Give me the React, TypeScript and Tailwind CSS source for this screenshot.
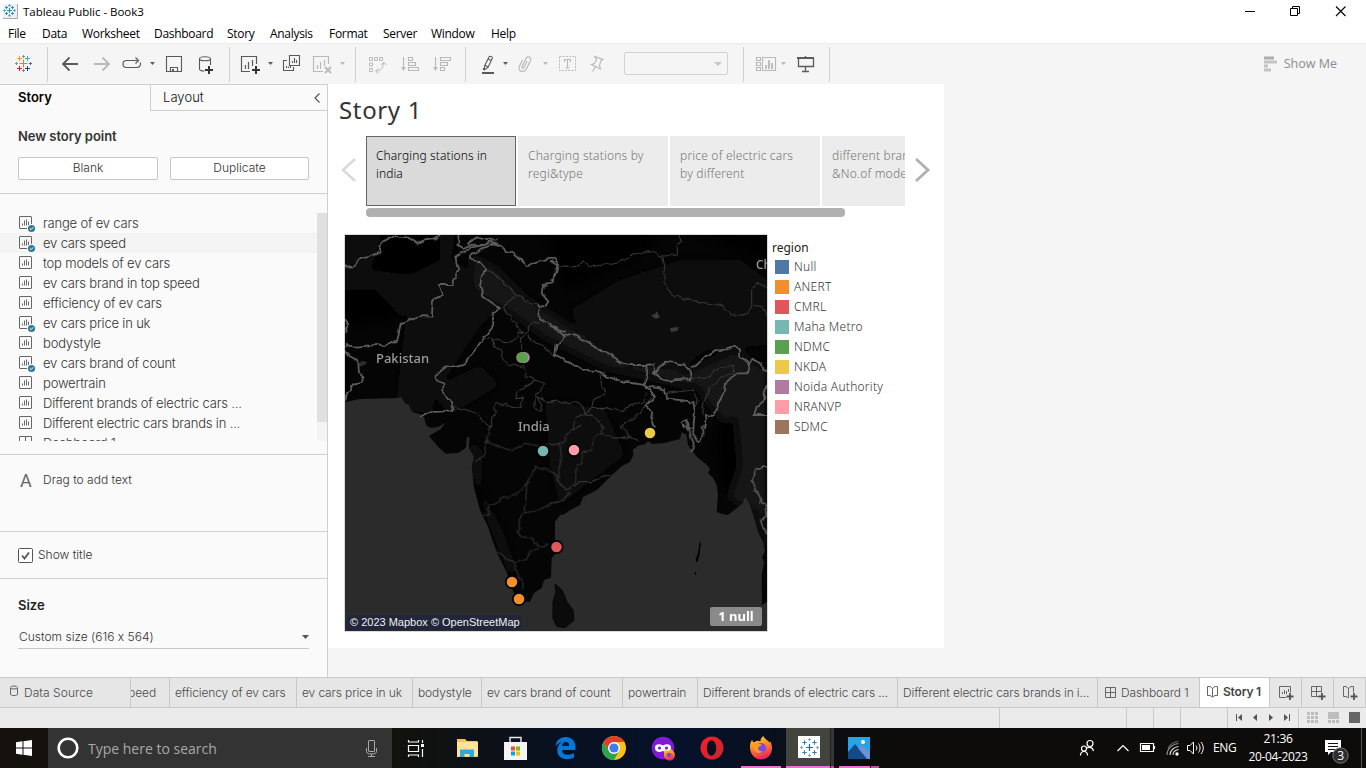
import React from "react";

type SegProps = { x: number; y: number; w: number; h: number; children?: React.ReactNode };

/* A strip of drawing whose viewBox uses window coordinates. */
function Seg({ x, y, w, h, children }: SegProps) {
  return (
    <svg className="block shrink-0" width={w} height={h} viewBox={`${x} ${y} ${w} ${h}`} fill="none">
      {children}
    </svg>
  );
}

const D = "#5a5a5a";
const L = "#b9b9b9";

function Caret({ x, y = 62, c = D }: { x: number; y?: number; c?: string }) {
  return <path d={`M${x} ${y}h5l-2.5 3z`} fill={c} />;
}

function Plus({ x, y, r, c, w = 1 }: { x: number; y: number; r: number; c: string; w?: number }) {
  return <path d={`M${x - r} ${y}h${2 * r}M${x} ${y - r}v${2 * r}`} stroke={c} strokeWidth={w} />;
}

function Tool({ x, w, children }: { x: number; w: number; children?: React.ReactNode }) {
  return (
    <Seg x={x} y={44} w={w} h={40}>
      {children}
    </Seg>
  );
}

function TitleBar() {
  return (
    <div className="flex h-[23px] shrink-0 items-center bg-white pl-[3px] font-['Open_Sans',sans-serif]">
      <svg width="15" height="15" viewBox="3 4 15 15" className="block shrink-0" fill="none">
        <path d="M3 4h14v14h-14z" fill="#eef1f3" />
        <path d="M17.5 4v14.5H3" stroke="#aaa" />
        <Plus x={9.500} y={10.500} r={2.500} c="#2f86b5" />
        <Plus x={6.500} y={7.500} r={1.500} c="#3b8dbb" />
        <Plus x={12.500} y={7.500} r={1.500} c="#3b8dbb" />
        <Plus x={6.500} y={13.500} r={1.500} c="#3b8dbb" />
        <Plus x={12.500} y={13.500} r={1.500} c="#3b8dbb" />
        <Plus x={9.500} y={5.500} r={1.300} c="#5aa0c8" />
        <Plus x={9.500} y={15.500} r={1.300} c="#5aa0c8" />
        <Plus x={4.500} y={10.500} r={1.300} c="#5aa0c8" />
        <Plus x={14.500} y={10.500} r={1.300} c="#5aa0c8" />
      </svg>
      <span className="ml-[5px] flex-1 text-[11.5px] tracking-[-0.03px] text-black">Tableau Public - Book3</span>
      <Seg x={1230} y={0} w={136} h={22}>
        <path d="M1245 10.5h10" stroke="#000" />
        <path d="M1290.500 7.500h7v7h-7zM1292.500 7.500v-2h7v7h-2" stroke="#000" />
        <path d="M1336 5.500l9.500 9.500M1345.500 5.500l-9.500 9.500" stroke="#000" strokeWidth="1.100" />
      </Seg>
    </div>
  );
}

const menu: [string, string][] = [
  ["File", "w-[34px]"],
  ["Data", "w-10"],
  ["Worksheet", "w-[72px]"],
  ["Dashboard", "w-[73px]"],
  ["Story", "w-[43px]"],
  ["Analysis", "w-[59px]"],
  ["Format", "w-[54px]"],
  ["Server", "w-12"],
  ["Window", "w-[60px]"],
  ["Help", "w-10"],
];

function MenuBar() {
  return (
    <div className="flex h-5 shrink-0 items-center bg-white pt-[2px] pl-2 font-['Open_Sans',sans-serif] text-[12px] tracking-[-0.3px] whitespace-nowrap text-black">
      {menu.map(([m, w]) => (
        <span key={m} className={`${w} shrink-0`}>
          {m}
        </span>
      ))}
    </div>
  );
}

function Toolbar() {
  return (
    <div className="flex h-[41px] shrink-0 border-t border-[#ececec] bg-[#f5f5f5]">
      <Tool x={0} w={56}>
        <Plus x={23.500} y={63.500} r={4} c="#e8762d" />
        <Plus x={19.500} y={58.500} r={2.500} c="#eb9a45" />
        <Plus x={27.500} y={58.500} r={2.500} c="#5f9aa8" />
        <Plus x={19.500} y={68.500} r={2.500} c="#c72035" />
        <Plus x={27.500} y={68.500} r={2.500} c="#1f457e" />
        <Plus x={23.500} y={56.500} r={1.500} c="#7199a6" />
        <Plus x={23.500} y={70.500} r={1.500} c="#7b85a9" />
        <Plus x={16.500} y={63.500} r={1.500} c="#7199a6" />
        <Plus x={30.500} y={63.500} r={1.500} c="#5b6591" />
        <path d="M47.500 47v35" stroke="#d0d0d0" />
      </Tool>
      <Tool x={56} w={60}>
        <path d="M63 64h15M69.500 57.500L63 64l6.500 6.500" stroke={D} strokeWidth="1.800" />
        <path d="M94 64h15M102.500 57.500L109 64l-6.500 6.500" stroke={L} strokeWidth="1.800" />
      </Tool>
      <Tool x={116} w={44}>
        <path d="M126.500 60.500h11M137 67.500h-10.500a3.500 3.500 0 0 1 0-7M137 67.500a3.500 3.500 0 0 0 3.200-5M135.500 57.500l3 3-3 3" stroke={D} strokeWidth="1.200" />
        <Caret x={150} />
      </Tool>
      <Tool x={160} w={74}>
        <path d="M166.500 56.500h15v15h-15zM170.500 71.500v-4h7v4" stroke={D} strokeWidth="1.100" />
        <path d="M172 69h2v3h-2z" fill={D} />
        <path d="M199.500 59v10c0 1.200 2 2 5 2M210.500 59v6" stroke={D} strokeWidth="1.100" />
        <ellipse cx="205" cy="58.700" rx="5.500" ry="2" stroke={D} strokeWidth="1.100" />
        <Plus x={209} y={70} r={4} c="#333" w={2} />
        <path d="M229.500 47v35" stroke="#d0d0d0" />
      </Tool>
      <Tool x={234} w={124}>
        <path d="M250 71.500h-8.500v-15h15V64M245.500 69v-4M248.500 69v-7M252.500 66v-6" stroke={D} strokeWidth="1.200" />
        <Plus x={256} y={70} r={4} c="#333" w={2} />
        <Caret x={268} />
        <path d="M289.500 55.500h10v10h-10zM292.500 63v-2M294.500 63v-5M296.500 63v-3M287 60.500h-3.500v10h10v-3.500M286.500 68v-2M288.500 68v-1.500M290.500 68v-2" stroke={D} strokeWidth="1.100" />
        <path d="M323 71.500h-9.500v-15h15V64M317.500 69v-4M320.500 69v-7M324.500 66v-6" stroke={L} strokeWidth="1.200" />
        <path d="M325 67l6 6M331 67l-6 6" stroke={L} strokeWidth="1.800" />
        <Caret x={340} c={L} />
        <path d="M355.500 47v35" stroke="#d0d0d0" />
      </Tool>
      <Tool x={358} w={112}>
        <path d="M369.500 57.500h3v3h-3zM374.500 57.500h3v3h-3zM379.500 57.500h3v3h-3zM369.500 63h3v3h-3zM369.500 68.500h3v3h-3zM376 71c4 0 7-2 7.500-8M381 65l2.800-2.800L386 65M378.500 68.500L375.500 71l3 2.500" stroke={L} />
        <path d="M403.500 57v12M408.500 57.500h4v3h-4zM408.500 62.500h7v3h-7zM408.500 67.500h10v3h-10z" stroke={L} strokeWidth="1.100" />
        <path d="M401 67h5l-2.500 4z" fill={L} />
        <path d="M435.500 57v12M440.500 57.500h10v3h-10zM440.500 62.500h7v3h-7zM440.500 67.500h4v3h-4z" stroke={L} strokeWidth="1.100" />
        <path d="M433 67h5l-2.500 4z" fill={L} />
        <path d="M465.500 47v35" stroke="#d0d0d0" />
      </Tool>
      <Tool x={470} w={144}>
        <path d="M484.500 66l4.500-9c.8-1.500 4-.2 3.200 1.500L488 67.500l-3.500 2.300zM488 59l3.300 1.500M484.500 65l3.500 2M483.500 68v2" stroke={D} strokeWidth="1.100" />
        <path d="M482 72h12v2h-12z" fill={D} />
        <Caret x={503} />
        <path d="M527 61l-3 6.500c-.6 1.400-2.600.5-2-1l4-8c1.500-3.200 6-1.200 4.500 2l-4.500 9c-1.500 2.800-5 2.200-6.500.5-1-1.200-.6-2.600 0-4l3-6" stroke={L} strokeWidth="1.200" />
        <Caret x={543} c={L} />
        <path d="M559.500 56.500h16v14h-16z" stroke={L} strokeDasharray="2 1.200" />
        <path d="M564.500 62v-2.500h6V62M567.500 59.500V68M565.500 68h4" stroke={L} strokeWidth="1.200" />
        <path d="M594.500 56.500l8.500 3-2 1.200-1.500 4.800 1 3.500-9-4.500 3-1 2-4.500zM595.500 67l-3 4.500" stroke={L} strokeWidth="1.100" />
      </Tool>
      <div className="w-[10px] shrink-0" />
      <div className="mt-2 flex h-[23px] w-[104px] shrink-0 items-center justify-end rounded-[2px] border border-[#d2d2d2] pr-[5px]">
        <svg width="8" height="4" viewBox="0 0 8 4">
          <path d="M0 0h8L4 4z" fill="#c6c6c6" />
        </svg>
      </div>
      <Tool x={728} w={112}>
        <path d="M743.500 47v35M829.500 47v35" stroke="#d0d0d0" />
        <path d="M756.500 57.500h4v3h-4zM756.500 62.500h4v3h-4zM756.500 67.500h4v3h-4zM762.500 57.500h13v13h-13z" stroke={L} strokeWidth="1.100" />
        <path d="M766 69v-4M769 69v-9M772 69v-6" stroke={L} strokeWidth="1.800" />
        <Caret x={781} c={L} />
        <path d="M797 58h17" stroke={D} strokeWidth="2" />
        <path d="M798.500 58v8.500h15V58M805.500 67v4M802 71.500h7M805.500 56v1" stroke={D} strokeWidth="1.300" />
      </Tool>
      <div className="flex flex-1 items-center justify-end pt-px pr-[29px]">
        <Seg x={1263} y={55.500} w={20} h={17}>
          <path d="M1262 56h11v3h-11z" fill="#ababab" />
          <path d="M1262 60h14v3h-14zM1262 64h5v3h-5zM1262 68h8v3h-8z" fill="#c4c4c4" />
        </Seg>
        <span className="font-['Open_Sans',sans-serif] text-[12.5px] tracking-[0.02px] text-[#8c8c8c]">Show Me</span>
      </div>
    </div>
  );
}

const sheets: [string, boolean][] = [
  ["range of ev cars", true],
  ["ev cars speed", true],
  ["top models of ev cars", false],
  ["ev cars brand in top speed", false],
  ["efficiency of ev cars", false],
  ["ev cars price in uk", true],
  ["bodystyle", false],
  ["ev cars brand of count", true],
  ["powertrain", false],
  ["Different brands of electric cars ...", false],
  ["Different electric cars brands in ...", false],
];

function SheetIcon({ checked }: { checked: boolean }) {
  return (
    <svg width="18" height="20" viewBox="0 0 18 20" fill="none" className="block shrink-0">
      <rect x="1.500" y="3.500" width="12" height="12" rx="0.500" stroke="#666" />
      <path d="M4.500 12.500v-2M6.500 12.500v-5M8.500 12.500v-6M10.500 12.500v-4" stroke="#666" />
      {checked && (
        <g>
          <circle cx="13.500" cy="15.500" r="4.500" fill="#fafafa" />
          <circle cx="13.500" cy="15.500" r="3.600" fill="#31799b" />
          <path d="M11.800 15.500l1.200 1.200 2.200-2.300" stroke="#fff" />
        </g>
      )}
    </svg>
  );
}

function Sidebar() {
  return (
    <aside className="flex w-[328px] shrink-0 flex-col border-t border-r border-[#cfcfcf] bg-[#fafafa] font-['Inter',sans-serif] font-light text-[#333] [font-feature-settings:'calt'_0]">
      <div className="flex h-[26px] shrink-0 text-[13px] text-[#111]">
        <div className="flex w-[150px] items-center pl-[18px] font-semibold text-black">Story</div>
        <div className="flex flex-1 items-center justify-between border-b border-l border-[#cfcfcf] pr-[7px] pl-3">
          <span className="tracking-[0.05px]">Layout</span>
          <svg width="6" height="10" viewBox="0 0 6 10" fill="none">
            <path d="M5.500 .5L1 5l4.500 4.500" stroke="#555" strokeWidth="1.200" />
          </svg>
        </div>
      </div>
      <div className="flex h-[83px] shrink-0 flex-col border-b border-[#cfcfcf] px-[18px] pt-[15px]">
        <div className="h-[31px] text-[13px] leading-5 font-semibold tracking-[-0.05px] text-[#333]">New story point</div>
        <div className="flex gap-3">
          <div className="flex h-[23px] w-[140px] items-center justify-center rounded-[2px] border border-[#c6c6c6] bg-white pb-px text-[12px]">Blank</div>
          <div className="flex h-[23px] w-[139px] items-center justify-center rounded-[2px] border border-[#c6c6c6] bg-white pb-px text-[12px]">Duplicate</div>
        </div>
      </div>
      <div className="flex h-[261px] shrink-0 border-b border-[#cfcfcf] pt-[19px]">
        <div className="h-[228px] flex-1 overflow-hidden">
          {sheets.map(([name, checked], i) => (
            <div key={name} className={`flex h-5 items-center pl-[18px] ${i === 1 ? "bg-[#f4f4f4]" : ""}`}>
              <SheetIcon checked={checked} />
              <span className="ml-[7px] text-[13px] leading-5 tracking-[-0.18px] whitespace-nowrap">{name}</span>
            </div>
          ))}
          <div className="flex h-5 items-center pl-[18px]">
            <svg width="18" height="20" viewBox="0 0 18 20" fill="none">
              <path d="M1.500 3.500h12v12h-12zM7.500 3.500v12M1.500 9.500h12" stroke="#666" />
            </svg>
            <span className="ml-[7px] text-[13px] leading-5 tracking-[-0.18px]">Dashboard 1</span>
          </div>
        </div>
        <div className="h-[228px] w-[10px] bg-[#f4f4f4]">
          <div className="h-[209px] bg-[#e0e0e0]" />
        </div>
      </div>
      <div className="flex h-[77px] shrink-0 items-start border-b border-[#cfcfcf] pt-4 pl-[20px]">
        <span className="w-[23px] font-['Roboto',sans-serif] text-[18px] leading-[19px] font-normal text-[#666]">A</span>
        <span className="text-[12px] leading-[18px]">Drag to add text</span>
      </div>
      <div className="flex h-[47px] shrink-0 items-center border-b border-[#cfcfcf] pl-[18px]">
        <svg width="15" height="15" viewBox="0 0 15 15" fill="none">
          <rect x="0.500" y="0.500" width="14" height="14" rx="1" fill="#fff" stroke="#555" />
          <path d="M4 7.500L6.500 10.500 11 4.500" stroke="#555" strokeWidth="1.800" />
        </svg>
        <span className="ml-[5px] text-[12px]">Show title</span>
      </div>
      <div className="flex flex-1 flex-col px-[18px] pt-4">
        <div className="h-[31px] text-[13px] leading-5 font-semibold text-[#222]">Size</div>
        <div className="flex h-[23px] items-center justify-between border-b border-[#c6c6c6] pl-px text-[12px]">
          <span>Custom size (616 x 564)</span>
          <svg width="7" height="4" viewBox="0 0 7 4">
            <path d="M0 0h7L3.500 4z" fill="#555" />
          </svg>
        </div>
      </div>
    </aside>
  );
}

const countryNW = [
  "15,105 35,115 60,88 90,80 118,68 125,35 155,20 185,25 205,20 235,40 258,30 280,28 300,15",
  "355,15 355,45 370,55 395,44 430,45 455,35 475,40",
  "382,42 410,22 440,30 475,28",
  "15,345 45,350 105,345 130,348 172,332 182,280 240,258 275,260 280,208 308,195 298,165 335,165 355,120 345,80 395,52 430,45",
  "15,270 22,285 15,305",
  "15,360 30,380 55,395 57,430 73,440 65,458 40,465 22,490 15,515",
  "470,38 425,55 390,75 390,88 418,95 440,122 425,140 420,165 430,200 480,235 458,250 460,285 430,325 405,360 375,400 340,410 320,405 290,435 288,450 310,460 310,490 330,510 338,540 300,545 265,547 240,560",
  "455,38 480,48 495,62 520,70 560,105 590,98 620,88 640,85 655,100 645,130 640,160 610,165 605,190 625,215 615,230 595,225 600,265 625,280 675,310",
];
const stateNW = [
  "440,120 470,135 500,165 530,195 560,215 595,222",
  "530,200 500,215 490,235 500,250 530,285 550,310",
  "435,325 470,330 505,340 535,320 535,305 565,310 565,285 600,275",
  "460,330 460,348 485,360 490,385 505,405 520,400 545,410",
  "545,360 545,320 560,312",
  "545,400 555,420 560,440 585,450",
  "585,450 540,480 525,490 530,505 550,505 540,535 500,530 500,520 480,525 465,520 465,560 455,560 455,595 430,575 410,550 380,540 340,530",
  "585,450 610,460 605,480 585,495 585,535 600,545 605,525 590,500 620,515 655,510",
  "565,310 570,330 600,345 645,375",
];
const countryNE = [
  "45,318 20,345 15,375 60,400 120,425 150,425 170,440 220,455 285,465 290,405 240,405 210,400 185,375 155,365 130,345 100,330 65,310 45,318",
  "0,288 20,300 45,320",
  "0,95 22,105 20,125 10,145 0,150",
  "290,405 310,402 312,430 345,395 370,398 405,405 420,425 424,448 345,452 312,430",
  "420,412 440,405 465,380 500,362 530,358 555,350 570,355 570,380 600,400 615,390 635,400 640,420 655,425",
  "600,400 595,430 560,430 525,460 520,490 505,520 495,555 465,552 470,565 465,600",
  "285,465 300,470 345,478 348,505 430,515 435,545 430,590 415,595 410,570 395,575 405,600",
  "285,465 300,480 315,500 285,525 310,545 305,570 315,590",
  "655,460 640,490 645,510 620,530 612,555 655,555",
];
const stateNE = [
  "25,107 75,110 100,95 120,110 160,105 210,95 250,72 300,65 335,78 385,75 380,40 395,35 385,15",
  "335,80 345,120 345,165 375,200 430,212 520,228 545,255 580,255 605,235 605,180 620,160 645,170 655,185",
  "605,225 635,230 655,265",
  "425,445 480,440 490,420 550,405 550,430 520,440 480,470 465,510 455,550",
  "345,490 430,480 445,510 430,540",
  "150,430 155,465 165,490 130,510 125,535 105,555 100,530 80,515 40,520 15,510 0,515",
  "125,535 190,535 220,545 240,525 280,515 290,490",
  "65,600 80,560 125,555 150,575 160,600",
  "210,595 225,575 260,560 285,530",
];
const stateSW = [
  "455,0 435,50 480,65 515,78 555,55 600,65 640,55 660,60",
  "440,45 430,95 405,110",
  "660,165 640,140 590,125 580,145 560,175 525,210 490,220 450,240 445,270 430,270",
  "560,175 555,265 540,270 535,320 545,335 580,340 595,365 625,360",
  "555,265 620,245 660,225",
  "470,375 500,405 530,410 560,400 570,380 600,370",
  "520,410 530,440 545,470 550,500",
];
const stateSE = [
  "0,60 30,60 35,100 25,140 20,165 50,195 90,170 125,170 150,155 185,150",
  "30,60 65,15 95,0",
  "150,0 155,20 130,45 125,75 100,80 95,120 80,120 80,165 60,195",
  "155,20 190,40 240,35 225,10",
  "215,0 245,40 265,50",
  "0,235 40,225 60,200",
];
const countrySE = [
  "400,0 415,15 435,65 425,80",
  "430,0 430,30 445,50 460,35 455,10 465,0",
  "655,125 620,130 605,170 625,210 645,240 650,270 630,290 655,330",
];

const quads = [
  { at: "translate(340 230) scale(.33333)", country: countryNW, state: stateNW },
  { at: "translate(550 230) scale(.33333)", country: countryNE, state: stateNE },
  { at: "translate(340 425) scale(.33333)", country: [] as string[], state: stateSW },
  { at: "translate(550 425) scale(.33333)", country: countrySE, state: stateSE },
];

const markers: [number, number, string][] = [
  [543, 451, "#76b7b2"],
  [574, 450, "#ff9da7"],
  [650, 433, "#edc948"],
  [556.5, 547, "#e15759"],
  [512, 582, "#f28e2b"],
  [519, 599, "#f28e2b"],
];

function IndiaMap() {
  return (
    <div className="relative h-[398px] w-[424px] shrink-0 overflow-hidden border border-[#d9d9d9] bg-[#060606]">
      <svg width="422" height="396" viewBox="345 235 422 396" fill="none" className="block">
        <defs>
          <filter id="soft" x="-5%" y="-5%" width="110%" height="110%">
            <feGaussianBlur stdDeviation="5" />
          </filter>
          <filter id="jag" filterUnits="userSpaceOnUse" x="345" y="235" width="422" height="396" colorInterpolationFilters="sRGB">
            <feTurbulence type="fractalNoise" baseFrequency="0.16" numOctaves="1" seed="4" />
            <feDisplacementMap in="SourceGraphic" scale="6" xChannelSelector="R" yChannelSelector="G" />
          </filter>
        </defs>
        <path d="M345 235h422v396h-422z" fill="#050505" />
        <g filter="url(#soft)">
          <path d="M345 235h110l-8 45-22 30-45 12-35 5z" fill="#0c0c0c" />
          <path d="M405 325l25-45 15-25 30 20 25 30-20 22-30 45-20 20 5 20-40 0z" fill="#0a0a0a" />
          <path d="M430 312l12-30 14 8-8 50-20 4z" fill="#111" />
          <path d="M470 255l25 12 30 30 32 20 60 40 70 15 50 2-2 14-50-2-80-18-60-30-30-22-40-28z" fill="#141414" />
          <path d="M570 310l50-30 60-20 60 0 27 20v65l-60 5-30 20-50-5-40-25z" fill="#0b0b0b" />
          <path d="M380 240h60v20l-30 15-40-5z" fill="#030303" />
          <path d="M345 290l30 0 25 25-55 12z" fill="#000" />
          <path d="M545 235h120l-40 30-60 25z" fill="#000" />
          <path d="M690 235h77v25z" fill="#000" />
          <path d="M690 370l45-20 32 20v50l0 140-12-50-25-10 0-70-25-30z" fill="#131313" />
          <path d="M715 430l20-15 5 50-10 30-12-20z" fill="#050505" />
          <path d="M470 440l12 10 0 40 20 40 15 40-8 5-20-50-20-60z" fill="#111" />
          <path d="M545 400l60 10 20 45-40 30-25 20-10-40z" fill="#0c0c0c" />
          <path d="M430 390l50-25 20 20-50 30z" fill="#0b0b0b" />
        </g>
        <path
          d="M345 402L360 399 398 398 401 397 405 403 409 405 412 412 420 414 424 417 426 425 430 428 438 427 445 423 441 429 434 433 429 436 438 446.700 446 453.700 458 453 466 447.700 466.700 437.700 469.500 436.500 469 448 474 457 471.700 467 474 488 480 510 488 526.700 493 541.700 498 555 506.700 572 511.700 588 518 601.700 530 601.700 534 593 541.700 588 544 580 551 577.700 551.700 558 557 552 555 538 555 521.700 560 515 565 514 570 510 580 505 583 497 597 490 612 475 622 466 630 462 633.500 455 632.700 450 638 445.700 645 444 648 441 652 444 665 443 672 441 680 439 681.700 432 686.700 435 688 445 693 452 697 457 707 465 710 469 708 473 713 477.700 716.700 485 718 495 716.700 511.700 722 514 728 515 736.700 508 743 503 745 497 750 505 754 518 758 532 763 542 765 551 762 557 764 562 761.700 575 762 605 767 602V631H345z"
          fill="#2b2b2b"
        />
        <path d="M555 584l7 6 5 12 6 8 1 10-9 7.500-8-1-4-8v-17l3-9z" fill="#0b0b0b" stroke="#050505" />
        <path d="M700.500 542l-1.500 13-2 7-1-3 2-4zM695 572l1 3" fill="#000" stroke="#000" />
        <path d="M651 315l4-1 2-3 1 3 2 3-4 2-3-2zM670 328l9-1-2 4-6 1z" fill="#3a3a3a" />
        <path d="M358 364l4-3 5 1-2 3-4 1z" fill="#2b2b2b" />
        <g filter="url(#jag)">
          {quads.map((q) => (
            <g key={q.at} transform={q.at} strokeLinejoin="round">
              {q.state.map((p) => (
                <polyline key={p} points={p} stroke="#363636" strokeWidth="3.300" />
              ))}
              {q.country.map((p) => (
                <polyline key={p} points={p} stroke="#5c5c5c" strokeWidth="5.400" />
              ))}
            </g>
          ))}
        </g>
        <g fontFamily="'Noto Sans', sans-serif" fontSize="13" fontWeight="500" fill="#9c9c9c">
          <text x="376" y="363">Pakistan</text>
          <text x="518" y="431">India</text>
          <text x="756" y="269" fontSize="12">China</text>
        </g>
        <circle cx="522.500" cy="357.500" r="7" fill="#000" />
        <circle cx="524" cy="357.500" r="5.700" fill="#c77fb4" />
        <circle cx="521.700" cy="357.500" r="5.600" fill="#9c755f" />
        <circle cx="522.500" cy="357.500" r="5.500" fill="#59a14f" />
        {markers.map(([x, y, c]) => (
          <g key={`${x}`}>
            <circle cx={x} cy={y} r="7" fill="#000" />
            <circle cx={x} cy={y} r="5.300" fill={c} />
          </g>
        ))}
      </svg>
      <div className="absolute bottom-px left-[2px] flex h-[15px] w-[175px] items-center bg-[#22263a] pl-[3px] font-['Liberation_Sans',sans-serif] text-[11px] whitespace-nowrap text-[#f0f0f0]">
        © 2023 Mapbox © OpenStreetMap
      </div>
      <div className="absolute right-[5px] bottom-[5px] flex h-[19px] w-[52px] items-center justify-center rounded-[2px] bg-[#8a8a8a] font-['Noto_Sans',sans-serif] text-[13px] font-bold text-white">
        1 null
      </div>
    </div>
  );
}

const legend: [string, string][] = [
  ["Null", "bg-[#4e79a7]"],
  ["ANERT", "bg-[#f28e2b]"],
  ["CMRL", "bg-[#e15759]"],
  ["Maha Metro", "bg-[#76b7b2]"],
  ["NDMC", "bg-[#59a14f]"],
  ["NKDA", "bg-[#edc948]"],
  ["Noida Authority", "bg-[#b07aa1]"],
  ["NRANVP", "bg-[#ff9da7]"],
  ["SDMC", "bg-[#9c755f]"],
];

const points: [string, string][] = [
  ["Charging stations in", "india"],
  ["Charging stations by", "regi&type"],
  ["price of electric cars", "by different"],
  ["different brands", "&No.of models"],
];

function StoryCanvas() {
  return (
    <main className="flex flex-1 bg-[#f5f5f5]">
      <div className="flex h-[564px] w-[616px] flex-col bg-white font-['Noto_Sans',sans-serif]">
        <div className="h-[52px] shrink-0 pl-[11px] text-[24px] leading-[51px] tracking-[0.65px] text-[#333]">Story 1</div>
        <div className="flex h-[70px] shrink-0 items-center">
          <div className="w-[38px] shrink-0 pb-[2px] pl-[13px]">
            <svg width="16" height="26" viewBox="0 0 16 26" fill="none">
              <path d="M14 2L2 13l12 11" stroke="#dadada" strokeWidth="2.600" />
            </svg>
          </div>
          <div className="flex h-[70px] w-[539px] shrink-0 gap-[2px] overflow-hidden">
            {points.map(([a, b], i) => (
              <div
                key={a}
                className={`h-[70px] w-[150px] shrink-0 pt-[11px] pl-[10px] text-[12px] leading-[18px] font-light whitespace-nowrap ${
                  i === 0
                    ? "bg-[#dadada] tracking-[0.1px] text-black outline outline-1 -outline-offset-1 outline-[#666]"
                    : "bg-[#ececec] tracking-[0.2px] text-[#777]"
                }`}
              >
                <div>{a}</div>
                <div>{b}</div>
              </div>
            ))}
          </div>
          <div className="pb-[2px] pl-[9px]">
            <svg width="18" height="26" viewBox="0 0 18 26" fill="none">
              <path d="M2 2l12 11L2 24" stroke="#b0b0b0" strokeWidth="2.800" />
            </svg>
          </div>
        </div>
        <div className="mt-[2px] ml-[38px] h-[9px] w-[479px] shrink-0 rounded-[4px] bg-[#b0b0b0]" />
        <div className="mt-[17px] flex pl-4">
          <IndiaMap />
          <div className="flex flex-col pt-1 pl-1 text-[12px] font-light tracking-[0.25px] text-[#333]">
            <div className="h-[19px] leading-[19px] font-normal tracking-[0px] text-[#222]">region</div>
            {legend.map(([name, c]) => (
              <div key={name} className="flex h-5 items-center pl-[3px] leading-5">
                <span className={`mr-[5px] size-[14px] ${c}`} />
                {name}
              </div>
            ))}
          </div>
        </div>
      </div>
    </main>
  );
}

const tabs: [string, string][] = [
  ["efficiency of ev cars", "w-[127px]"],
  ["ev cars price in uk", "w-[116px]"],
  ["bodystyle", "w-[69px]"],
  ["ev cars brand of count", "w-[141px]"],
  ["powertrain", "w-[75px]"],
  ["Different brands of electric cars ...", "w-[200px]"],
  ["Different electric cars brands in i...", "w-[200px]"],
];

function SheetTabs() {
  return (
    <div className="flex h-[31px] shrink-0 border-t border-b border-[#c9c9c9] bg-[#e6e6e6] font-['Inter',sans-serif] text-[12px] font-light tracking-[-0.12px] whitespace-nowrap text-[#4a4a4a]">
      <div className="flex w-[131px] shrink-0 items-center border-r border-[#c9c9c9] pl-[9px]">
        <svg width="10" height="14" viewBox="9 685 10 14" fill="none" className="mb-1">
          <path d="M10.500 689v6c0 1.300 1.500 1.500 3.500 1.500s3.500-.2 3.500-1.500v-6" stroke="#666" />
          <ellipse cx="14" cy="688.500" rx="3.500" ry="1.500" stroke="#666" />
        </svg>
        <span className="ml-[5px] tracking-[0.05px]">Data Source</span>
      </div>
      <div className="flex w-[39px] shrink-0 items-center justify-end overflow-hidden border-r border-[#c9c9c9] pr-[13px]">peed</div>
      {tabs.map(([t, w]) => (
        <div key={t} className={`flex shrink-0 items-center border-r border-[#c9c9c9] pl-[5px] ${w}`}>
          {t}
        </div>
      ))}
      <div className="flex w-[102px] shrink-0 items-center border-r border-[#c9c9c9] pl-[7px]">
        <svg width="11" height="11" viewBox="0 0 11 11" fill="none">
          <path d="M.5 .5h10v10h-10zM5.500 .5v10M.5 5.500h10" stroke="#666" />
        </svg>
        <span className="ml-[5px]">Dashboard 1</span>
      </div>
      <div className="flex w-[70px] shrink-0 items-center border-r border-[#c9c9c9] bg-white pb-[2px] pl-[6px] font-semibold tracking-[-0.2px] text-[#444]">
        <svg width="13" height="13" viewBox="0 0 13 13" fill="none">
          <path d="M1.500 1.500h2.500l2.500 2 2.500-2h2.500v9h-2.500l-2.500 1.500-2.500-1.500h-2.500zM6.500 3.500v8" stroke="#666" />
        </svg>
        <span className="ml-1">Story 1</span>
      </div>
      <Seg x={1270} y={678} w={96} h={29}>
        <path d="M1301.500 678v29M1333.500 678v29M1365.500 678v29" stroke="#c9c9c9" />
        <path d="M1286 697.500h-6.500v-11h11v6M1282.500 694v-2M1284.500 694v-4M1286.500 694v-3M1288.500 692v-3" stroke="#666" />
        <Plus x={1290} y={696.500} r={3.500} c="#555" w={1.800} />
        <path d="M1319 696.500h-7.500v-10h10v6M1316.500 686.500v10M1311.500 691.500h10" stroke="#666" />
        <Plus x={1322} y={696.500} r={3.500} c="#555" w={1.800} />
        <path d="M1348.500 698l-2.500-1.500h-2.500v-10h2.500l2.500 2 2.500-2h2.500v6M1348.500 688.500v9" stroke="#666" />
        <Plus x={1354} y={696.500} r={3.500} c="#555" w={1.800} />
      </Seg>
    </div>
  );
}

function StatusBar() {
  return (
    <div className="flex h-5 shrink-0 justify-end bg-[#ebebeb]">
      <Seg x={990} y={708} w={376} h={20}>
        <path d="M999.500 708v20M1126.500 708v20M1153.500 708v20M1180.500 708v20M1227.500 708v20M1298.500 708v20" stroke="#c9c9c9" />
        <path d="M1242 714v7l-4-3.500zM1257 714v7l-4-3.500zM1269 714v7l4-3.500zM1284 714v7l4-3.500z" fill="#555" />
        <path d="M1236.500 714v7M1289.500 714v7" stroke="#555" />
        <g fill="#bdbdbd">
          {[1307, 1311, 1315].map((x) =>
            [712, 716, 720].map((y) => <rect key={`${x}${y}`} x={x} y={y} width="3" height="3" />),
          )}
          <path d="M1328 712h11v7h-11zM1328 720h3v3h-3zM1332 720h3v3h-3zM1336 720h3v3h-3z" />
        </g>
        <path d="M1349 712h11v11h-11z" fill="#666" />
      </Seg>
    </div>
  );
}

function Taskbar() {
  return (
    <div className="flex h-10 shrink-0 bg-[#0d0c0a] font-['Open_Sans',sans-serif] text-white">
      <Seg x={0} y={728} w={48} h={40}>
        <path d="M0 728h48v40h-48z" fill="#15120d" />
        <path d="M16 742.200l6.500-.9v6.200H16zM23.500 741.200l8.500-1.200v7.500h-8.500zM16 748.500h6.500v6.200l-6.500-.9zM23.500 748.500h8.500v7.500l-8.500-1.200z" fill="#fff" />
      </Seg>
      <div className="flex w-[344px] shrink-0 items-center bg-[#333]">
        <svg width="40" height="40" viewBox="48 728 40 40" fill="none">
          <circle cx="68" cy="748" r="9.300" stroke="#fff" strokeWidth="2.600" />
        </svg>
        <span className="flex-1 text-[14px] text-[#a8a8a8]">Type here to search</span>
        <svg width="30" height="40" viewBox="362 728 30 40" fill="none">
          <rect x="368.500" y="740.500" width="6" height="11" rx="0.500" stroke="#a8a8a8" />
          <path d="M366.500 748v3.500c0 2 2 2.500 5 2.500s5-.5 5-2.500V748M371.500 754v2.500M368 756.500h7" stroke="#a8a8a8" />
        </svg>
      </div>
      <Seg x={392} y={728} w={492} h={40}>
        <defs>
          <linearGradient id="ff" x1="0" y1="0" x2="0.300" y2="1">
            <stop offset="0" stopColor="#ffd93b" />
            <stop offset="0.500" stopColor="#ff8a1f" />
            <stop offset="1" stopColor="#f0265f" />
          </linearGradient>
          <linearGradient id="op" x1="0" y1="0" x2="1" y2="1">
            <stop offset="0" stopColor="#ff1b2d" />
            <stop offset="1" stopColor="#c1272d" />
          </linearGradient>
          <linearGradient id="bar" x1="0" y1="0" x2="1" y2="0">
            <stop offset="0" stopColor="#12120d" />
            <stop offset="0.350" stopColor="#081020" />
            <stop offset="0.600" stopColor="#06122b" />
            <stop offset="1" stopColor="#0c0c0a" />
          </linearGradient>
        </defs>
        <path d="M392 728h492v40h-492z" fill="url(#bar)" />
        <path d="M408.500 740v2h10v-2M408.500 745.500h10v6h-10zM408.500 757v-2h10v2M422.500 740v3M422.500 749v8" stroke="#fff" strokeWidth="1.200" />
        <path d="M421 744h3v3h-3z" fill="#fff" />

        <path d="M457 739h8l2 2h10.500v16h-20.500z" fill="#f6c545" />
        <path d="M457 742h21v14.500h-21z" fill="#ffe394" />
        <path d="M460 757v-7.500h14v7.500h-4.500v-3h-5v3z" fill="#2ea9e0" />

        <path d="M510 742v-4.500h11v4.500" stroke="#e8e8e8" strokeWidth="1.400" />
        <path d="M504 742h23v18h-23z" fill="#f4f4f4" />
        <path d="M511 746.500h4v4h-4z" fill="#f25022" />
        <path d="M516 746.500h4v4h-4z" fill="#7fba00" />
        <path d="M511 751.500h4v4h-4z" fill="#00a4ef" />
        <path d="M516 751.500h4v4h-4z" fill="#ffb900" />

        <path d="M555.500 746.500c.5-6 4.800-9.500 10-9.500 6.500 0 10 4.500 10 10.500v2.500H562c.2 3.500 3 4.800 6 4.800 2.300 0 4.300-.7 6-1.700v4.500c-2 1-4.300 1.700-7 1.700-6 0-9.800-3.500-9.800-9 0-4 2-6.500 4.800-8-3 .5-5.300 2.200-6.500 4.200zM562.200 746h7c0-2.500-1-4-3.300-4s-3.500 1.800-3.700 4z" fill="#0078d7" />

        <circle cx="614" cy="748" r="12" fill="#fbc116" />
        <path d="M603.600 742a12 12 0 0 1 20.800 0H614l-5.200 9z" fill="#e33b2e" />
        <path d="M603.600 742a12 12 0 0 0 10.400 18l5.200-9H608.800z" fill="#2ba24c" />
        <circle cx="614" cy="748" r="6" fill="#fff" />
        <circle cx="614" cy="748" r="4.600" fill="#3b7ded" />

        <circle cx="663" cy="748" r="11.300" fill="#7f1bd6" />
        <path d="M655 747.500c0-3.500 4.500-4 8-2 3.500-2 8-1.500 8 2s-2.500 4.500-4.500 4.500-2.500-1-3.500-1-1.500 1-3.500 1-4.500-1-4.500-4.500z" fill="#fff" />
        <circle cx="659.500" cy="748" r="1.600" fill="#7f1bd6" />
        <circle cx="666.500" cy="748" r="1.600" fill="#7f1bd6" />
        <path d="M664 752c0-1 1-2 2-2l2 1c1-1 2-1 3-2 2 2 4 3 4 6 0 3.500-2.500 5.500-5.500 5.500s-5.500-2.500-5.500-5.500z" fill="url(#ff)" />
        <circle cx="669" cy="755" r="2.300" fill="#8a3fd0" />

        <circle cx="712" cy="748" r="11.500" fill="url(#op)" />
        <ellipse cx="711.500" cy="748" rx="4.700" ry="7.800" fill="#07101f" />

        <path d="M750 747c0-3 .5-5 2-7l1.500 2.500 3-1.500c2-.5 3 .5 4 0 0-2 1-4 3-5 .5 3 4 3.500 6 6.500l.7-1c1.500 2.500 2 5 1.800 7.500-.5 6-5 10.500-11 10.500s-11-5-11-12.500z" fill="url(#ff)" />
        <circle cx="761" cy="748" r="5" fill="#7a4be0" />
        <path d="M753 744c2-1.500 4-1 6 0l3 .5c-1 1.500-3 2-4 3 0 2.500 1.500 4.500 5 3.500-2 3-7 2.500-9-1z" fill="#ff9a22" />

        <path d="M786 728h44v40h-44z" fill="#44443f" />
        <path d="M830 728h4v40h-4z" fill="#363633" />
        <path d="M830.500 728v40" stroke="#222" />
        <path d="M798 736h22v22h-22z" fill="#fff" />
        <Plus x={809.500} y={747.500} r={3.500} c="#1c6b9a" w={1.200} />
        <Plus x={804.500} y={742.500} r={2.300} c="#3b7fa8" />
        <Plus x={814.500} y={742.500} r={2.300} c="#3b7fa8" />
        <Plus x={804.500} y={752.500} r={2.300} c="#3b7fa8" />
        <Plus x={814.500} y={752.500} r={2.300} c="#3b7fa8" />
        <Plus x={809.500} y={739.500} r={1.600} c="#7fa8c2" />
        <Plus x={809.500} y={755.500} r={1.600} c="#7fa8c2" />
        <Plus x={801.500} y={747.500} r={1.600} c="#7fa8c2" />
        <Plus x={817.500} y={747.500} r={1.600} c="#7fa8c2" />

        <path d="M848 737h22v22h-22z" fill="#25a5e8" />
        <path d="M848 752l7-8 13 15h-20z" fill="#124a8c" />
        <path d="M858 748l4-3 8 8v6h-3z" fill="#6f8fd6" />
        <circle cx="863" cy="742" r="2" fill="#fff" />

        <path d="M741 766h40v2h-40zM786 766h44v2h-44zM839 766h31v2h-31z" fill="#ee6fd6" />
        <path d="M831 766h3v2h-3zM871 766h8v2h-8z" fill="#b553a4" />
      </Seg>
      <div className="flex-1" />
      <div className="flex w-[290px] shrink-0 items-center">
        <Seg x={1076} y={728} w={137} h={40}>
          <g stroke="#fff" strokeWidth="1.200">
            <circle cx="1090" cy="743.500" r="3" />
            <circle cx="1084" cy="748.500" r="2.500" />
            <path d="M1080.500 755.500c0-3 1.500-4 3.500-4s3.500 1 3.500 4M1087 748c1-1 5.500-1.500 6.500 3" />
            <path d="M1117.500 751l5.500-5.500 5.500 5.500" />
            <path d="M1140.500 743.500h13v8h-13zM1154.500 746v3" />
          </g>
          <path d="M1142 745h8v5h-8z" fill="#fff" />
          <g strokeWidth="1.100">
            <path d="M1167 755c0-6 5-11 11.500-11.500" stroke="#8a8a8a" />
            <path d="M1170 755c0-4.500 4-8 8.500-8.500M1173 755c0-3 2.500-5 5.500-5.500" stroke="#ddd" />
            <path d="M1168 748c2-3.500 6-6 10-6.500" stroke="#666" />
          </g>
          <circle cx="1177" cy="754" r="1.700" fill="#fff" />
          <path d="M1187.500 745.500h2.500l3.500-3.500v12l-3.500-3.500h-2.500zM1196 745.500c1.200 1.500 1.200 3.500 0 5M1198.500 743.500c2 2.500 2 6.500 0 9M1201 742c3 3.500 3 8.500 0 12" stroke="#fff" />
        </Seg>
        <span className="w-[35px] text-[12px] tracking-[-0.4px]">ENG</span>
        <div className="flex w-[60px] flex-col items-center text-[12px] leading-[18px] tracking-[-0.35px] whitespace-nowrap">
          <span>21:36</span>
          <span>20-04-2023</span>
        </div>
        <Seg x={1308} y={728} w={58} h={40}>
          <path d="M1325 740h16v12h-10l-3 3v-3h-3z" fill="#fff" />
          <path d="M1328 743.500h10M1328 746.500h10M1328 749.500h7" stroke="#111" />
          <circle cx="1340.500" cy="755.500" r="7.700" fill="#2e2e2e" stroke="#777" />
          <text x="1337.200" y="760" fontSize="12" fontFamily="'Open Sans', sans-serif" fill="#fff">
            3
          </text>
          <path d="M1361.500 728v40" stroke="#555" />
        </Seg>
      </div>
    </div>
  );
}

export default function App() {
  return (
    <div className="flex h-[768px] w-[1366px] flex-col overflow-hidden bg-[#f5f5f5]">
      <TitleBar />
      <MenuBar />
      <Toolbar />
      <div className="flex h-[593px] shrink-0">
        <Sidebar />
        <StoryCanvas />
      </div>
      <SheetTabs />
      <StatusBar />
      <Taskbar />
    </div>
  );
}
